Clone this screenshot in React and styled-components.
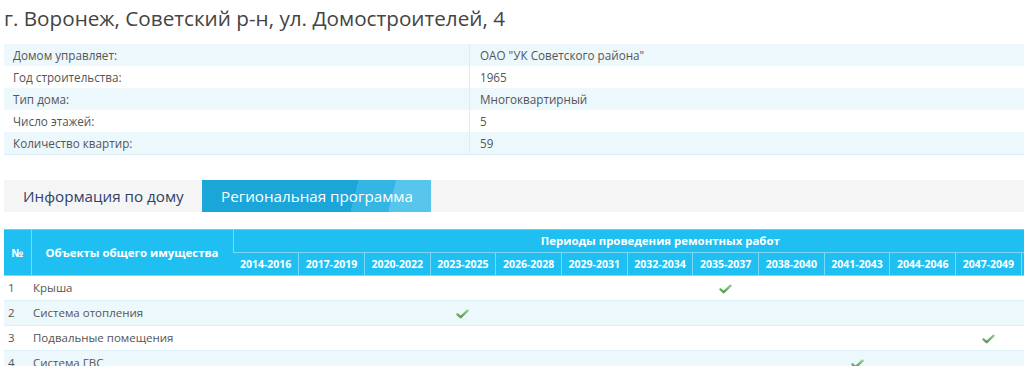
import React from "react";
import styled, { createGlobalStyle } from "styled-components";

const Global = createGlobalStyle`
  html, body { margin: 0; padding: 0; background: #fff; overflow: hidden; }
  body { font-family: "Open Sans", "DejaVu Sans", sans-serif; color: #555; }
`;

const Page = styled.div`
  padding: 3px 0 0 4px;
  width: 1090px;
`;

const Title = styled.h1`
  margin: 0;
  font-size: 20.7px;
  font-weight: 400;
  line-height: 30px;
  color: #444;
`;

const InfoTable = styled.table`
  margin-top: 11px;
  width: 1020px;
  border-collapse: collapse;
  font-size: 11.7px;
  border-bottom: 1px solid #d9eef6;
`;

const InfoRow = styled.tr`
  background: ${(p) => (p.$alt ? "#edf8fd" : "#fff")};
  height: 22px;
`;

const InfoLabel = styled.td`
  width: 456px;
  padding: 0 0 0 9px;
  border-right: 1px solid #d9eef6;
  color: #555;
`;

const InfoValue = styled.td`
  padding: 0 0 0 10px;
  color: #555;
`;

const TabBar = styled.div`
  margin-top: 25px;
  width: 1020px;
  height: 32px;
  background: #f5f5f5;
  display: flex;
`;

const Tab = styled.div`
  display: flex;
  align-items: center;
  padding: 0 19px;
  font-size: 15.2px;
  white-space: nowrap;
  color: ${(p) => (p.$active ? "#fff" : "#2f4168")};
  background: ${(p) =>
    p.$active
      ? "linear-gradient(104deg, #1ba6da 0%, #1ba6da 66%, #35b5e3 66%, #35b5e3 82%, #57c5ec 82%, #57c5ec 100%)"
      : "transparent"};
  width: ${(p) => p.$w}px;
  box-sizing: border-box;
`;

const Schedule = styled.table`
  margin-top: 17px;
  width: 1083px;
  border-collapse: collapse;
  table-layout: fixed;
  border-top: 1px solid #5cd2f6;
`;

const Th = styled.th`
  background: #1fbff2;
  color: #fff;
  font-weight: 700;
  font-size: ${(p) => (p.$small ? "10.5px" : "11.4px")};
  height: 22px;
  padding: 0;
  border-left: 1px solid #7cd8f6;
  border-bottom: 1px solid #7cd8f6;
  white-space: nowrap;
  overflow: hidden;
  text-align: center;
  &:first-child { border-left: none; }
`;

const Row = styled.tr`
  background: ${(p) => (p.$alt ? "#edf8fd" : "#fff")};
  height: 25px;
  border-bottom: 1px solid #dcf0f8;
`;

const Td = styled.td`
  padding: 0;
  color: #555;
  font-size: 11.5px;
  text-align: ${(p) => (p.$center ? "center" : "left")};
  padding-left: ${(p) => (p.$pl ? p.$pl : 0)}px;
  white-space: nowrap;
  vertical-align: middle;
`;

const Check = () => (
  <svg width="13" height="10" viewBox="0 0 14 11" style={{ display: "inline-block", verticalAlign: "middle" }}>
    <defs>
      <linearGradient id="cg" x1="0" y1="0" x2="0" y2="1">
        <stop offset="0" stopColor="#8fcc87" />
        <stop offset="1" stopColor="#559b52" />
      </linearGradient>
    </defs>
    <path d="M1.5 5.8 L5 9 L12.5 1.8" fill="none" stroke="url(#cg)" strokeWidth="2.6" strokeLinecap="round" strokeLinejoin="round" />
  </svg>
);

const info = [
  ["Домом управляет:", 'ОАО "УК Советского района"'],
  ["Год строительства:", "1965"],
  ["Тип дома:", "Многоквартирный"],
  ["Число этажей:", "5"],
  ["Количество квартир:", "59"],
];

const periods = [];
for (let y = 2014; y <= 2050; y += 3) periods.push(`${y}-${y + 2}`);

const items = [
  ["Крыша", "2035-2037"],
  ["Система отопления", "2023-2025"],
  ["Подвальные помещения", "2047-2049"],
  ["Система ГВС", "2041-2043"],
];

export default function App() {
  return (
    <>
      <Global />
      <Page>
        <Title>г. Воронеж, Советский р-н, ул. Домостроителей, 4</Title>
        <InfoTable>
          <tbody>
            {info.map(([l, v], i) => (
              <InfoRow key={l} $alt={i % 2 === 0}>
                <InfoLabel>{l}</InfoLabel>
                <InfoValue>{v}</InfoValue>
              </InfoRow>
            ))}
          </tbody>
        </InfoTable>
        <TabBar>
          <Tab $w={198}>Информация по дому</Tab>
          <Tab $active $w={229}>Региональная программа</Tab>
        </TabBar>
        <Schedule>
          <colgroup>
            <col style={{ width: 27 }} />
            <col style={{ width: 202 }} />
            {periods.map((p) => (
              <col key={p} style={{ width: 65.7 }} />
            ))}
          </colgroup>
          <thead>
            <tr>
              <Th rowSpan={2}>№</Th>
              <Th rowSpan={2}>Объекты общего имущества</Th>
              <Th colSpan={periods.length}>Периоды проведения ремонтных работ</Th>
            </tr>
            <tr>
              {periods.map((p) => (
                <Th key={p} $small>{p}</Th>
              ))}
            </tr>
          </thead>
          <tbody>
            {items.map(([name, when], i) => (
              <Row key={name} $alt={i % 2 === 1}>
                <Td $pl={4}>{i + 1}</Td>
                <Td $pl={2}>{name}</Td>
                {periods.map((p) => (
                  <Td key={p} $center>{p === when ? <Check /> : null}</Td>
                ))}
              </Row>
            ))}
          </tbody>
        </Schedule>
      </Page>
    </>
  );
}
